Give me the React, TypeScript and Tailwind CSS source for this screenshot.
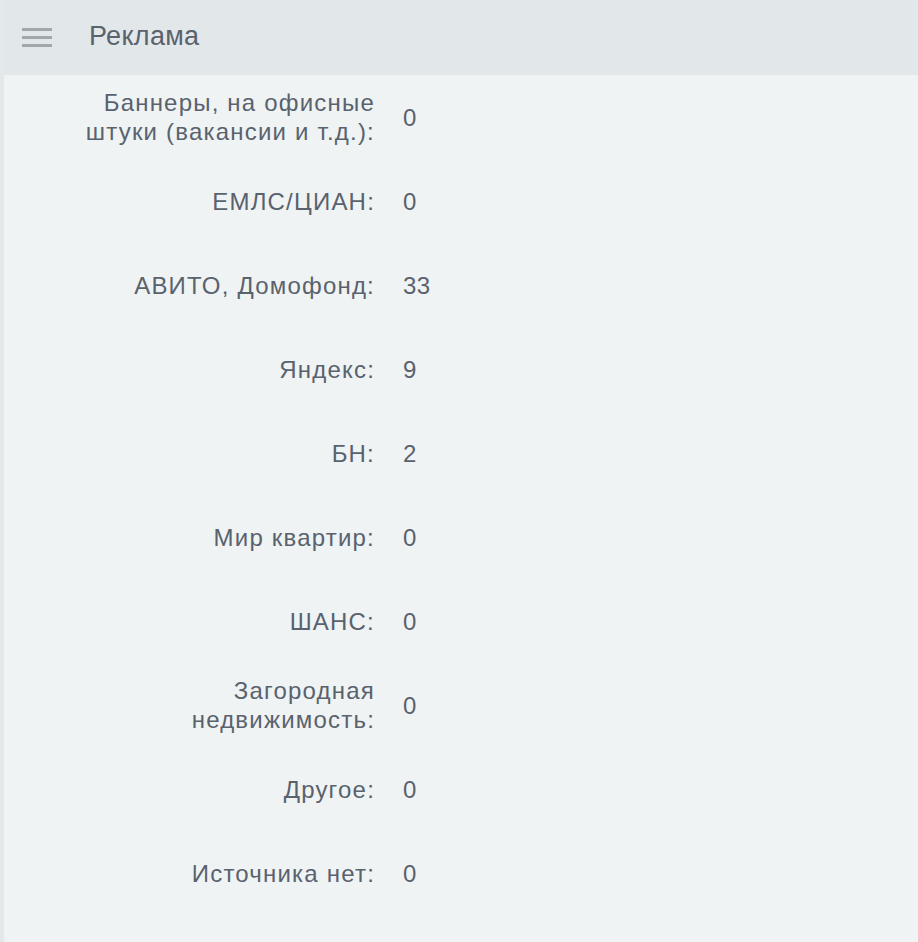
const rows: { label: string; value: string }[] = [
  { label: "Баннеры, на офисные штуки (вакансии и т.д.):", value: "0" },
  { label: "ЕМЛС/ЦИАН:", value: "0" },
  { label: "АВИТО, Домофонд:", value: "33" },
  { label: "Яндекс:", value: "9" },
  { label: "БН:", value: "2" },
  { label: "Мир квартир:", value: "0" },
  { label: "ШАНС:", value: "0" },
  { label: "Загородная недвижимость:", value: "0" },
  { label: "Другое:", value: "0" },
  { label: "Источника нет:", value: "0" },
];

export default function App() {
  return (
    <div className="min-h-[942px] bg-[#eff3f4] border-l-4 border-[#e3e8eb] text-[#59626d] font-['Liberation_Sans',Arial,sans-serif]">
      <div className="h-[75px] bg-[#e2e7ea] flex items-center">
        <div className="ml-[18px] w-[30px] flex flex-col gap-[5px]">
          <span className="block h-[3px] bg-[#a3a8ad]" />
          <span className="block h-[3px] bg-[#a3a8ad]" />
          <span className="block h-[3px] bg-[#a3a8ad]" />
        </div>
        <h1 className="ml-[37px] -mt-[2px] text-[27px] leading-none tracking-[0.3px]">Реклама</h1>
      </div>
      <div className="pb-[27px]">
        {rows.map((row) => (
          <div key={row.label} className="h-[84px] flex items-center">
            <div className="ml-[77px] w-[294px] text-right text-[24px] leading-[29px] tracking-[1.2px]">
              {row.label}
            </div>
            <div className="ml-[28px] text-[24px] leading-[29px] tracking-[0.5px]">{row.value}</div>
          </div>
        ))}
      </div>
    </div>
  );
}
